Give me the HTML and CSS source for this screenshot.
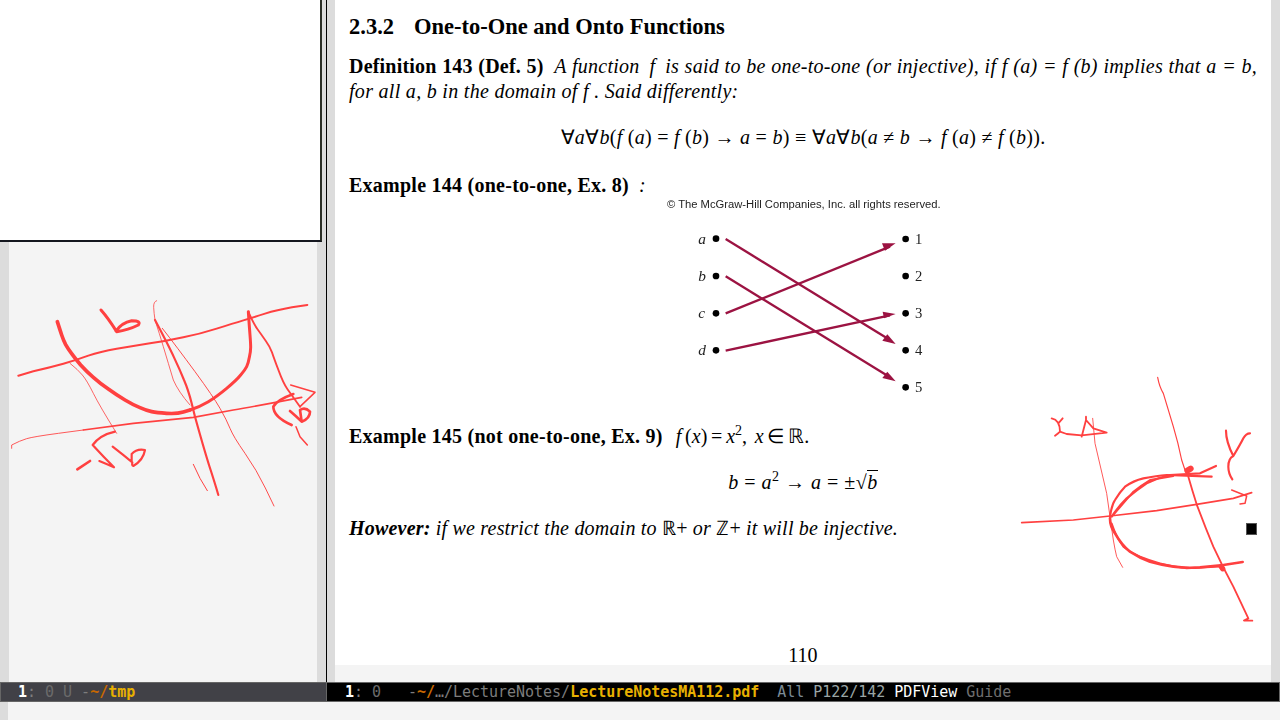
FILE: index.html
```html
<!DOCTYPE html>
<html lang="en">
<head>
<meta charset="utf-8">
<title>LectureNotesMA112.pdf</title>
<link rel="stylesheet" href="styles.css">
</head>
<body>
<main class="frame">
  <section class="pane-left">
    <div class="canvas"></div>
    <div class="popup"></div>
    <svg class="ink ink-left" viewBox="0 0 1020 870" fill="none" stroke="#ff4040" stroke-linecap="round" stroke-linejoin="round">
      <path stroke-width="6" d="M55 437L100 424Q150 412 190 401Q230 390 265 377Q300 365 350 356Q400 348 450 340Q500 333 550 322Q600 312 650 296Q700 280 730 271Q760 262 795 251Q830 240 876 232L922 225"/>
      <path stroke-width="11" d="M172 275Q180 300 185 315Q190 330 197 344Q205 358 215 371Q225 385 242 405Q260 425 280 442Q300 460 325 477Q350 495 375 510Q400 525 420 533Q440 542 455 545Q470 548 500 550Q530 552 550 546L570 540"/>
      <path stroke-width="9" d="M570 540Q600 530 625 515Q650 500 680 475Q710 450 722 435Q735 420 740 410Q745 400 748 382Q752 365 752 352Q752 340 750 315Q748 290 745 245"/>
      <path stroke-width="5.5" d="M745 245Q760 280 772 297Q785 315 797 332Q810 350 816 367Q822 385 836 422Q850 460 862 477L900 530"/>
      <path stroke-width="2.6" d="M35 655L35 645Q60 632 80 626Q100 620 175 610L250 600"/>
      <path stroke-width="5" d="M250 600Q325 590 400 580Q490 571 580 562Q640 551 700 540Q760 530 905 502"/>
      <path stroke-width="2.4" d="M210 400Q235 420 247 435Q260 450 280 490Q300 530 350 610"/>
      <path stroke-width="2.4" d="M470 212Q460 215 461 232Q462 250 465 270Q478 310 490 350Q505 400 520 450Q535 485 570 525"/>
      <path stroke-width="6.5" d="M465 270Q505 345 522 382Q540 420 552 450Q565 480 575 520L585 560Q610 650 627 705Q645 760 655 795"/>
      <path stroke-width="2.8" d="M487 295Q530 350 585 425Q640 500 660 535Q680 570 690 595Q700 620 735 670Q770 720 796 774L822 828"/>
      <path stroke-width="3" d="M580 703L600 745L622 782"/>
      <path stroke-width="9" d="M303 240Q325 265 350 305Q385 300 415 285Q425 272 395 272Q365 278 348 303"/>
      <path stroke-width="8" d="M232 718L270 693"/>
      <path stroke-width="6.5" d="M345 605Q300 615 278 645Q310 680 342 712Q320 702 298 693"/>
      <path stroke-width="6.5" d="M338 650Q370 675 397 697Q395 708 400 708Q430 690 435 660Q410 655 395 672L395 695"/>
      <path stroke-width="4.5" d="M872 465L945 487L900 530"/>
      <path stroke-width="8" d="M880 492Q830 510 820 530Q820 560 875 585"/>
      <path stroke-width="8" d="M870 543Q890 560 905 575Q930 565 930 545Q915 530 900 540L905 575"/>
      <path stroke-width="4.5" d="M888 590L900 620L922 645"/>
    </svg>
  </section>
  <section class="pane-right">
    <article class="sheet">
      <h2 class="heading"><span class="secnum">2.3.2</span>One-to-One and Onto Functions</h2>
      <p class="line line-just def-one"><b class="semi">Definition 143 (Def. 5)</b> &nbsp;<i class="wide">A function &thinsp;f&thinsp; is said to be one-to-one (or injective), if f (a) = f (b) implies that a = b,</i></p>
      <p class="line"><i class="wider">for all a, b in the domain of f . Said differently:</i></p>
      <p class="line display display-one">∀<i>a</i>∀<i>b</i>(<i>f</i> (<i>a</i>) = <i>f</i> (<i>b</i>) → <i>a</i> = <i>b</i>) ≡ ∀<i>a</i>∀<i>b</i>(<i>a</i> ≠ <i>b</i> → <i>f</i> (<i>a</i>) ≠ <i>f</i> (<i>b</i>)).</p>
      <p class="line example-one"><b class="wide">Example 144 (one-to-one, Ex. 8)</b> &nbsp;<i>:</i></p>
      <figure class="figure">
        <svg class="diagram" viewBox="0 0 300 210">
          <text class="copyright" x="51" y="55">© The McGraw-Hill Companies, Inc. all rights reserved.</text>
          <g class="dots">
            <circle cx="198" cy="146" r="10"/><circle cx="198" cy="258" r="10"/><circle cx="198" cy="370" r="10"/><circle cx="198" cy="481" r="10"/>
            <circle cx="767" cy="147" r="10"/><circle cx="767" cy="258" r="10"/><circle cx="767" cy="370" r="10"/><circle cx="767" cy="481" r="10"/><circle cx="767" cy="592" r="10"/>
          </g>
          <g class="arrows">
            <path d="M227 147L720 450"/><path d="M227 259L720 562"/><path d="M227 370L720 170"/><path d="M227 482L720 376"/>
            <path class="head" d="M737 462L697 452L712 433Z"/><path class="head" d="M737 574L697 564L712 545Z"/><path class="head" d="M737 160L705 182L696 160Z"/><path class="head" d="M737 372L702 385L698 365Z"/>
          </g>
          <g class="labels-left"><text x="145" y="161">a</text><text x="145" y="273">b</text><text x="145" y="385">c</text><text x="145" y="496">d</text></g>
          <g class="labels-right"><text x="795" y="161">1</text><text x="795" y="273">2</text><text x="795" y="385">3</text><text x="795" y="496">4</text><text x="795" y="607">5</text></g>
        </svg>
      </figure>
      <p class="line example-two"><b class="wide">Example 145 (not one-to-one, Ex. 9)</b><span class="formula"><i>f</i> (<i>x</i>) = <i>x</i><sup>2</sup>, &nbsp;<i>x</i> ∈ ℝ.</span></p>
      <p class="line display display-two"><i>b</i> = <i>a</i><sup>2</sup> → <i>a</i> = ±√<span class="radicand"><i>b</i></span></p>
      <div class="line however">
        <span class="semi"><b><i>However:</i></b> <i>if we restrict the domain to</i> ℝ+ <i>or</i> ℤ+ <i>it will be injective.</i></span>
        <span class="qed"></span>
      </div>
      <p class="pageno">110</p>
    </article>
    <svg class="ink ink-right" viewBox="0 0 840 780" fill="none" stroke="#ff4040" stroke-linecap="round" stroke-linejoin="round">
      <path stroke-width="5" d="M65 458L220 450L330 438L470 422L590 403L700 385L755 368"/>
      <path stroke-width="4.5" d="M695 360L740 378L735 400L720 402"/>
      <path stroke-width="2.6" d="M278 145L285 220L320 370L340 510Q345 540 350 560L368 592"/>
      <path stroke-width="3.5" d="M473 22Q478 50 490 70Q505 120 520 170Q535 220 545 270L555 300"/>
      <path stroke-width="5.5" d="M565 320Q578 365 590 403Q615 470 640 530Q670 595 700 650L745 745L732 752L757 752"/>
      <path stroke-width="6.5" d="M330 440Q335 405 345 390Q360 365 375 350Q400 332 430 325Q470 318 500 315L635 320"/>
      <path stroke-width="6.5" d="M335 440Q355 410 380 385Q410 360 440 340Q475 322 510 315L600 310L648 288"/>
      <path stroke-width="5.5" d="M340 435Q370 400 400 365Q425 345 450 330L520 318"/>
      <path stroke-width="8" d="M330 445Q330 470 345 490Q365 525 390 545Q420 565 450 575Q485 585 520 590Q560 595 600 592L670 585L728 576"/>
      <path stroke-width="5.5" d="M335 460Q350 505 370 530Q395 550 420 560Q450 572 480 580Q520 590 560 595L660 590"/>
      <path stroke-width="18" d="M562 302L572 296"/>
      <path stroke-width="16" d="M664 590L668 596"/>
      <path stroke-width="5.5" d="M155 145Q180 150 180 185Q175 190 165 197M188 145L175 160"/>
      <path stroke-width="5.5" d="M180 185L200 192L245 196L320 188L280 175L258 150L245 200M258 140L258 150"/>
      <path stroke-width="6.5" d="M678 182Q678 215 700 258Q720 225 730 205Q738 190 750 190M700 258Q685 265 685 290Q685 310 697 328"/>
    </svg>
  </section>
  <footer class="modeline modeline-left"><b class="num">1</b><span class="dim">:</span> <span class="dim2">0</span> <span class="dim2">U</span> <span class="dim">-</span><b class="home">~/</b><b class="file">tmp</b></footer>
  <footer class="modeline modeline-right"><b class="num">1</b><span class="dim">:</span> <span class="dim2">0</span>   <span class="dim">-</span><b class="home">~/</b><span class="dim">…/LectureNotes/</span><b class="file">LectureNotesMA112.pdf</b>  <span class="all">All</span> <span class="pos">P122/142</span> <span class="major">PDFView</span> <span class="minor">Guide</span></footer>
  <div class="strip strip-left"></div>
  <div class="strip strip-right"></div>
</main>
</body>
</html>
```
FILE: styles.css
```css
* { box-sizing: border-box; }
html, body { margin: 0; height: 720px; overflow: hidden; background: #f4f4f4; }
.frame {
  position: relative;
  display: grid;
  grid-template-columns: 327px 953px;
  grid-template-rows: 682px 20px 18px;
  width: 1280px;
  height: 720px;
}
.pane-left {
  background: #dcdcdc;
  padding: 0 9px;
  border-right: 1px solid #000;
}
.canvas { height: 100%; background: #f4f4f4; }
.popup {
  position: absolute;
  left: 0;
  top: 0;
  width: 322px;
  height: 242px;
  background: #fff;
  border-right: 2px solid #2b2f26;
  border-bottom: 2px solid #15171f;
}
.ink { position: absolute; }
.ink-left { left: 0; top: 230px; width: 340px; height: 290px; }
.ink-right { left: 1000px; top: 370px; width: 280px; height: 260px; }
.pane-right {
  background: #dcdcdc;
  padding: 0 9px 0 8px;
}
.sheet {
  display: flex;
  flex-direction: column;
  height: 665px;
  padding: 0 14px;
  background: #fff;
  color: #000;
  font: 20px/25px "Liberation Serif", serif;
  box-shadow: 0 17px 0 #f4f4f4;
}
.heading { margin: 14px 0 0; font-size: 22.5px; line-height: 25px; font-weight: bold; }
.secnum { margin-right: 20px; }
.line { margin: 0; white-space: nowrap; }
.line-just { white-space: normal; text-align: justify; text-align-last: justify; }
.wide { letter-spacing: 0.25px; }
.wider { letter-spacing: 0.3px; }
.semi { letter-spacing: 0.2px; }
.formula { margin-left: 13px; word-spacing: -1.2px; }
.def-one { margin-top: 15px; }
.display { text-align: center; }
.display-one { margin-top: 21px; letter-spacing: 0.27px; }
.example-one { margin-top: 23px; }
.figure { margin: -8px 0 0; height: 204px; padding-left: 301px; }
.diagram { display: block; width: 300px; height: 210px; overflow: visible; filter: blur(0.4px); }
.copyright { font: 33.7px "Liberation Sans", sans-serif; fill: #222; transform: scale(0.3333); }
.dots { transform: scale(0.3333); fill: #000; }
.arrows { transform: scale(0.3333); fill: none; stroke: #9c1342; stroke-width: 7; }
.arrows .head { fill: #9c1342; stroke: none; }
.labels-left { transform: scale(0.3333); font: italic 46px "Liberation Serif", serif; fill: #222; }
.labels-right { transform: scale(0.3333); font: 44px "Liberation Serif", serif; fill: #222; }
.example-two { margin-top: 30px; }
.display-two { margin-top: 21px; letter-spacing: 0.5px; }
.however { margin-top: 21px; display: flex; justify-content: space-between; align-items: center; }
.qed { width: 11px; height: 12px; background: #000; border: 1px solid #555; }
sup { font-size: 14px; line-height: 0; }
.radicand { border-top: 1px solid #000; }
.pageno { margin: auto 0 -3px; text-align: center; line-height: 25px; }
.modeline {
  display: block;
  padding-left: 18px;
  font: 15px/18px "DejaVu Sans Mono", monospace;
  letter-spacing: -0.03px;
  white-space: pre;
  border-top: 1px solid #666;
  border-bottom: 1px solid #666;
  color: #777;
}
.modeline b { font-weight: bold; }
.modeline-left { background: #414147; border-left: 1px solid #666; border-right: 1px solid #666; padding-left: 17px; }
.modeline-right { background: #000; border-right: 1px solid #666; }
.num { color: #fff; }
.dim { color: #7d7d7d; }
.dim2 { color: #6b6b6b; }
.home { color: #c86800; }
.file { color: #e8b000; }
.all { color: #7b8a94; }
.pos { color: #9aa5a5; }
.major { color: #fff; }
.minor { color: #6f6f6f; }
.strip-left { background: linear-gradient(90deg, #dcdcdc 8px, #f4f4f4 8px); }
.strip-right { background: #f4f4f4; }
```
